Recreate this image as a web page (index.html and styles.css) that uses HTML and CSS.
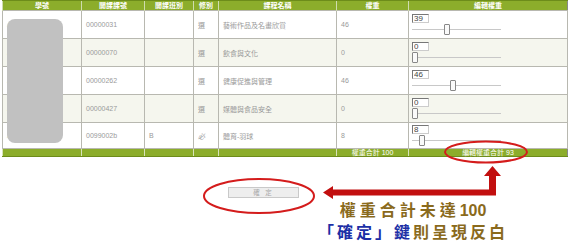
FILE: index.html
```html
<!DOCTYPE html>
<html lang="zh-Hant">
	<head>
		<meta charset="UTF-8" />
		<title>編輯權重</title>
		<link rel="stylesheet" href="styles.css">
	</head>
	<body>
		<div class="page">
			<table class="grid">
				<colgroup>
					<col style="width: 79px" />
					<col style="width: 63px" />
					<col style="width: 49px" />
					<col style="width: 25px" />
					<col style="width: 118px" />
					<col style="width: 72px" />
					<col style="width: 159px" />
				</colgroup>
				<thead>
					<tr>
						<th>學號</th>
						<th>開課課號</th>
						<th>開課班別</th>
						<th>修別</th>
						<th>課程名稱</th>
						<th>權重</th>
						<th>編輯權重</th>
					</tr>
				</thead>
				<tbody>
					<tr>
						<td class="sid">A</td>
						<td>00000031</td>
						<td></td>
						<td>選</td>
						<td>藝術作品及名畫欣賞</td>
						<td>46</td>
						<td class="edit">
							<input class="num" type="text" value="39" />
							<input class="slider" type="range" min="0" max="100" value="39" />
						</td>
					</tr>
					<tr class="alt">
						<td class="sid">A</td>
						<td>00000070</td>
						<td></td>
						<td>選</td>
						<td>飲食與文化</td>
						<td>0</td>
						<td class="edit">
							<input class="num" type="text" value="0" />
							<input class="slider" type="range" min="0" max="100" value="0" />
						</td>
					</tr>
					<tr>
						<td class="sid">A</td>
						<td>00000262</td>
						<td></td>
						<td>選</td>
						<td>健康促進與管理</td>
						<td>46</td>
						<td class="edit">
							<input class="num" type="text" value="46" />
							<input class="slider" type="range" min="0" max="100" value="46" />
						</td>
					</tr>
					<tr class="alt">
						<td class="sid">A</td>
						<td>00000427</td>
						<td></td>
						<td>選</td>
						<td>媒體與食品安全</td>
						<td>0</td>
						<td class="edit">
							<input class="num" type="text" value="0" />
							<input class="slider" type="range" min="0" max="100" value="0" />
						</td>
					</tr>
					<tr class="last">
						<td class="sid">A</td>
						<td>0099002b</td>
						<td>B</td>
						<td><i>必</i></td>
						<td>體育-羽球</td>
						<td>8</td>
						<td class="edit">
							<input class="num" type="text" value="8" />
							<input class="slider" type="range" min="0" max="100" value="8" />
						</td>
					</tr>
				</tbody>
				<tfoot>
					<tr>
						<td></td>
						<td></td>
						<td></td>
						<td></td>
						<td></td>
						<td>權重合計 100</td>
						<td>編輯權重合計 93</td>
					</tr>
				</tfoot>
			</table>

			<!-- student id column is blurred out -->
			<div class="mask"></div>

			<div class="actions">
				<button class="confirm" disabled>確 定</button>
			</div>

			<div class="note">
				<p class="line1">權重合計未達<b>100</b></p>
				<p class="line2"><span class="blue">「確定」鍵</span>則呈現反白</p>
			</div>

			<svg class="marks" width="570" height="245" viewBox="0 0 570 245">
				<ellipse cx="486" cy="152" rx="41" ry="10.5" fill="none" stroke="#d41c1c" stroke-width="2" />
				<ellipse cx="259" cy="196" rx="55" ry="17" fill="none" stroke="#d41c1c" stroke-width="2" />
				<polygon fill="#c20f0f" points="323,192.5 333,186 333,189.5 489,189.5 489,176 484,176 492.5,166 501,176 496,176 496,195.5 333,195.5 333,199" />
			</svg>
		</div>
	</body>
</html>
```

FILE: styles.css
```css
body {
	margin: 0;
	background: #fff;
	font-family: "Liberation Sans", "Noto Sans CJK TC", sans-serif;
}
.page {
	position: relative;
	width: 570px;
	height: 245px;
	overflow: hidden;
}
.grid {
	margin-left: 2px;
	width: 565px;
	table-layout: fixed;
	border-collapse: collapse;
	font-size: 7px;
	color: #9a9a9a;
	border-left: 1px solid #666;
	border-right: 1px solid #888;
}
.grid th {
	height: 9px;
	padding: 0;
	background: #8cad2b;
	border-top: 1px solid #6d8c1a;
	border-left: 1px solid #cfdcae;
	color: #fff;
	font-weight: bold;
	line-height: 9px;
	text-align: center;
}
.grid td {
	height: 27px;
	padding: 0 4px;
	border: 1px solid #b8b8b0;
	text-align: left;
	vertical-align: middle;
	white-space: nowrap;
	color: #9a9a9a;
}
.grid tr.last td {
	height: 25px;
}
.grid tbody td:first-child {
	color: #efe6b0;
}
.grid tr.alt td {
	background: #f5f6ee;
}
.grid i {
	font-style: italic;
}
.grid tfoot td {
	height: 7px;
	padding: 0;
	background: #8cad2b;
	border: none;
	border-left: 1px solid #d8e3bb;
	border-bottom: 1px solid #6d8c1a;
	color: #fff;
	font-size: 7px;
	line-height: 7px;
	text-align: center;
}
.grid td.edit {
	padding: 0 0 0 3px;
}
.num {
	display: block;
	box-sizing: border-box;
	width: 17px;
	height: 9px;
	margin: 0 0 1px;
	padding: 0 1px;
	border: 1px solid;
	border-color: #777 #ccc #ccc #777;
	font-family: "Liberation Sans", sans-serif;
	font-size: 8px;
	line-height: 7px;
	color: #444;
	background: #fff;
}
.slider {
	-webkit-appearance: none;
	appearance: none;
	display: block;
	width: 89px;
	height: 12px;
	margin: 0;
	background: transparent;
}
.slider::-webkit-slider-runnable-track {
	height: 1px;
	background: #c8c8c8;
}
.slider::-webkit-slider-thumb {
	-webkit-appearance: none;
	width: 6px;
	height: 11px;
	margin-top: -5px;
	box-sizing: border-box;
	border: 1px solid #888;
	border-radius: 1px;
	background: #fafafa;
}
.mask {
	position: absolute;
	left: 7px;
	top: 19px;
	width: 56px;
	height: 124px;
	border-radius: 8px;
	background: #c1c1c1;
}
.actions {
	padding: 30px 0 0 228px;
}
.confirm {
	display: block;
	width: 71px;
	height: 11px;
	padding: 0;
	border: 1px solid #c9c9c9;
	background: #eeeeee;
	color: #a8a8a8;
	font-family: "Noto Sans CJK TC", sans-serif;
	font-size: 6.5px;
	line-height: 9px;
	letter-spacing: 2px;
}
.note {
	width: 200px;
	margin: 1px 0 0 313px;
	text-align: center;
	font-family: "Noto Sans CJK TC", serif;
	font-size: 16px;
	font-weight: bold;
	color: #8a6a1c;
}
.note p {
	margin: 0;
	line-height: 20px;
	letter-spacing: 4px;
	white-space: nowrap;
}
.note .line2 {
	letter-spacing: 3px;
}
.note b {
	font-family: "Liberation Sans", sans-serif;
	letter-spacing: 0;
}
.blue {
	color: #1c2fa6;
}
.marks {
	position: absolute;
	left: 0;
	top: 0;
	pointer-events: none;
}
```
